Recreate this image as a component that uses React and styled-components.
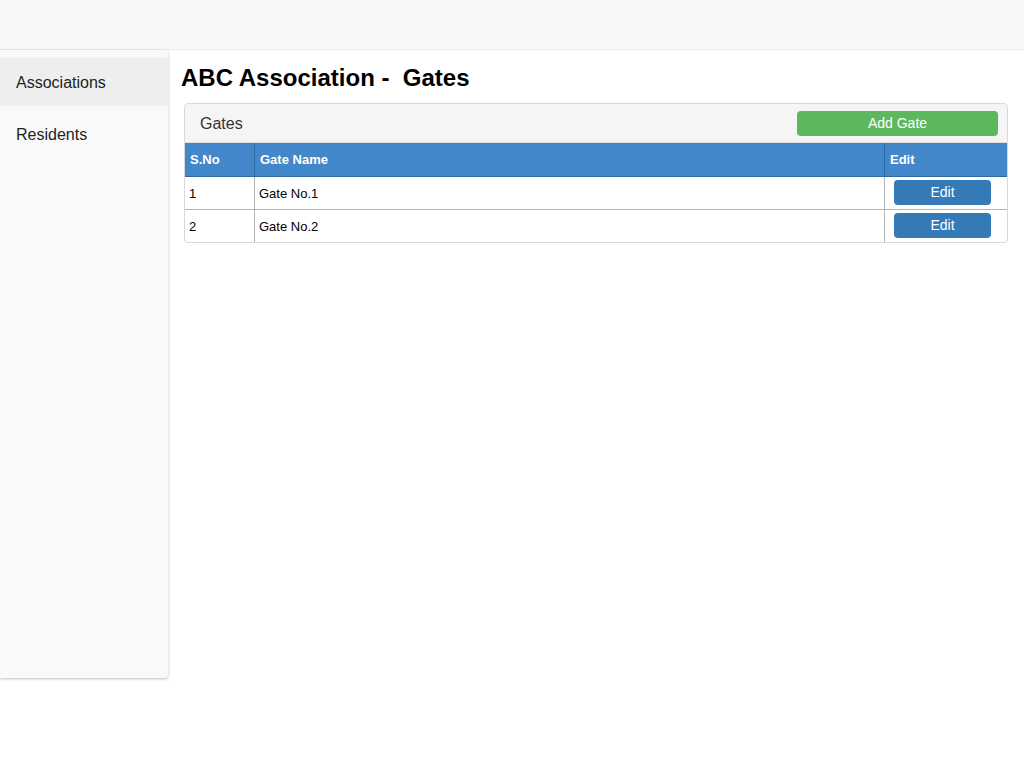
import React from 'react'
import styled, { createGlobalStyle } from 'styled-components'

const GlobalStyle = createGlobalStyle`
    html, body {
        margin: 0;
        padding: 0;
        background: #fff;
        font-family: "Liberation Sans", Arial, sans-serif;
        color: #333;
    }
`

const Page = styled.div`
    min-height: 768px;
    display: flex;
    flex-direction: column;
`

const TopBar = styled.div`
    height: 49px;
    background: #f7f7f7;
    border-bottom: 1px solid #ececec;
`

const Body = styled.div`
    display: flex;
    align-items: flex-start;
`

const Sidebar = styled.div`
    width: 168px;
    height: 628px;
    background: #f9f9f9;
    border-radius: 0 3px 3px 0;
    box-shadow: 0 1px 3px rgba(0, 0, 0, 0.25);
    padding-top: 8px;
    box-sizing: border-box;
    flex-shrink: 0;
`

const NavItem = styled.div`
    height: 48px;
    display: flex;
    align-items: center;
    padding-left: 16px;
    padding-top: 1px;
    box-sizing: border-box;
    font-size: 16px;
    color: #222;
    background: ${(props) => (props.active ? '#eeeeee' : 'transparent')};
    margin-bottom: 4px;
`

const Main = styled.div`
    flex: 1;
    padding: 13px 16px 0 13px;
`

const Title = styled.h1`
    margin: 0 0 10px 0;
    font-size: 24px;
    font-weight: bold;
    color: #000;
    line-height: 30px;
    white-space: pre;
`

const Panel = styled.div`
    margin-left: 3px;
    border: 1px solid #d8d8d8;
    border-radius: 4px;
    overflow: hidden;
`

const PanelHeading = styled.div`
    height: 38px;
    background: #f5f5f5;
    border-bottom: 1px solid #dddddd;
    display: flex;
    align-items: center;
    justify-content: space-between;
    padding: 0 9px 0 15px;
    font-size: 16px;
    color: #333;
`

const HeadingText = styled.span`
    padding-top: 2px;
`

const Button = styled.button`
    border: none;
    border-radius: 4px;
    color: #fff;
    font-family: "Liberation Sans", Arial, sans-serif;
    font-size: 14px;
    height: 25px;
    padding: 0;
    display: block;
    cursor: pointer;
    background: ${(props) => props.color};
    width: ${(props) => props.width};
`

const EditButton = styled(Button)`
    margin-bottom: 2px;
`

const Table = styled.table`
    width: 100%;
    border-collapse: collapse;
    font-size: 13px;
`

const Th = styled.th`
    background: #4287c9;
    color: #fff;
    text-align: left;
    font-weight: bold;
    height: 33px;
    padding: 0 5px;
    border: 1px solid #2f6aa3;
    border-top: none;
    width: ${(props) => props.width || 'auto'};
    &:first-child { border-left: none; }
    &:last-child { border-right: none; }
`

const Td = styled.td`
    height: 32px;
    padding: 0 4px;
    border: 1px solid #b5b5b5;
    border-top: none;
    color: #000;
    &:first-child { border-left: none; }
    &:last-child { border-right: none; padding: 0 0 0 9px; }
`

const Row = styled.tr`
    &:last-child td { border-bottom: none; }
`

const gates = [
    { id: 1, name: 'Gate No.1' },
    { id: 2, name: 'Gate No.2' },
]

const App = () => {
    return (
        <Page>
            <GlobalStyle />
            <TopBar />
            <Body>
                <Sidebar>
                    <NavItem active>Associations</NavItem>
                    <NavItem>Residents</NavItem>
                </Sidebar>
                <Main>
                    <Title>ABC Association -  Gates</Title>
                    <Panel>
                        <PanelHeading>
                            <HeadingText>Gates</HeadingText>
                            <Button color="#5cb85c" width="201px">Add Gate</Button>
                        </PanelHeading>
                        <Table>
                            <thead>
                                <tr>
                                    <Th width="59px">S.No</Th>
                                    <Th>Gate Name</Th>
                                    <Th width="112px">Edit</Th>
                                </tr>
                            </thead>
                            <tbody>
                                {gates.map((g) => (
                                    <Row key={g.id}>
                                        <Td>{g.id}</Td>
                                        <Td>{g.name}</Td>
                                        <Td>
                                            <EditButton color="#337ab7" width="97px">Edit</EditButton>
                                        </Td>
                                    </Row>
                                ))}
                            </tbody>
                        </Table>
                    </Panel>
                </Main>
            </Body>
        </Page>
    )
}

export default App
